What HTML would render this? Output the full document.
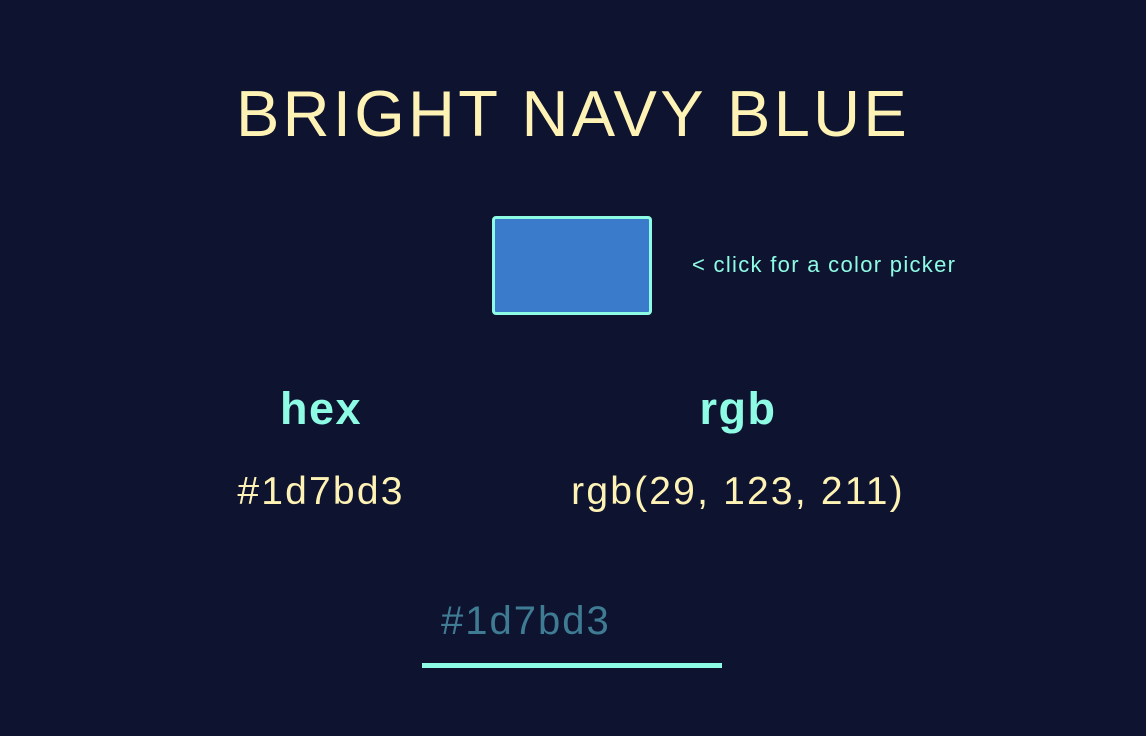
<!DOCTYPE html>
<html><head><style>
body{margin:0;width:1146px;height:736px;background:#0e1330;font-family:"Liberation Sans",sans-serif;position:relative;overflow:hidden}
div{position:absolute;white-space:nowrap}
.t{left:0;width:1146px;text-align:center;top:76px;font-size:65px;letter-spacing:3.3px;color:#fef3b5;line-height:76px}
.sw{left:492px;top:216px;width:154px;height:93px;background:#3a7bcb;border:3px solid #8efce4;border-radius:4px}
.note{left:692px;top:252px;font-size:22px;letter-spacing:1.3px;color:#8efce4}
.h{font-size:45px;letter-spacing:1.5px;font-weight:bold;color:#8efce4;top:383px;text-align:center;width:300px}
.v{font-size:39px;letter-spacing:2.2px;color:#fef3b5;top:470px;text-align:center;width:400px}
.in{left:441px;top:599px;font-size:40px;letter-spacing:2px;color:#3f7c94}
.ul{left:422px;top:663px;width:300px;height:5px;background:#8efce4}
</style></head><body>
<div class="t">BRIGHT NAVY BLUE</div>
<div class="sw"></div>
<div class="note">&lt; click for a color picker</div>
<div class="h" style="left:171px">hex</div>
<div class="h" style="left:588px">rgb</div>
<div class="v" style="left:121px">#1d7bd3</div>
<div class="v" style="left:538px">rgb(29, 123, 211)</div>
<div class="in">#1d7bd3</div>
<div class="ul"></div>
</body></html>
